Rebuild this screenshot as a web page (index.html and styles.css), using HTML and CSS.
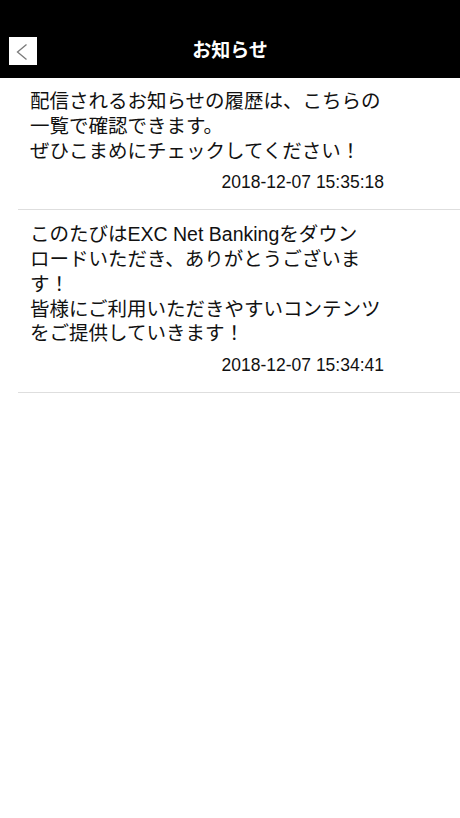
FILE: index.html
```html
<!DOCTYPE html>
<html lang="ja">
<head>
<meta charset="utf-8">
<title>お知らせ</title>
<link rel="stylesheet" href="styles.css">
</head>
<body>
<header class="navbar">
  <button class="back-btn" aria-label="戻る">
    <svg width="28" height="28" viewBox="0 0 28 28"><path d="M17.5 7.5 L8.5 15 L17.5 22.5" fill="none" stroke="#7a7a7a" stroke-width="1.3"/></svg>
  </button>
  <h1 class="nav-title">お知らせ</h1>
</header>
<ul class="news-list">
  <li class="news-item">
    <p class="news-body">配信されるお知らせの履歴は、こちらの<br>一覧で確認できます。<br>ぜひこまめにチェックしてください！</p>
    <div class="news-date">2018-12-07 15:35:18</div>
  </li>
  <li class="news-item">
    <p class="news-body">このたびはEXC Net Bankingをダウン<br>ロードいただき、ありがとうございま<br>す！<br>皆様にご利用いただきやすいコンテンツ<br>をご提供していきます！</p>
    <div class="news-date">2018-12-07 15:34:41</div>
  </li>
</ul>
</body>
</html>
```
FILE: styles.css
```css
html, body {
  margin: 0;
  padding: 0;
  background: #fff;
}
body {
  font-family: "Liberation Sans", "Noto Sans CJK JP", sans-serif;
  color: #111;
}
.navbar {
  position: relative;
  height: 78px;
  box-sizing: border-box;
  padding-top: 24px;
  background: #000;
  display: flex;
  align-items: center;
  justify-content: center;
}
.back-btn {
  position: absolute;
  left: 9px;
  top: 37px;
  width: 28px;
  height: 28px;
  padding: 0;
  border: 0;
  background: #fff;
  display: flex;
  align-items: center;
  justify-content: center;
}
.back-btn svg {
  display: block;
}
.nav-title {
  margin: 0;
  color: #fff;
  font-size: 19px;
  font-weight: bold;
  line-height: 54px;
  height: 54px;
  letter-spacing: 0;
}
.news-list {
  list-style: none;
  margin: 0 0 0 18px;
  padding: 0;
}
.news-item {
  padding: 11px 76px 16px 12px;
  border-bottom: 1px solid #dedede;
}
.news-item + .news-item {
  padding-top: 12px;
}
.news-body {
  margin: 0;
  font-size: 19.5px;
  line-height: 24.75px;
  white-space: nowrap;
}
.news-date {
  margin-top: 9px;
  text-align: right;
  font-size: 17.5px;
  line-height: 21px;
}
```
